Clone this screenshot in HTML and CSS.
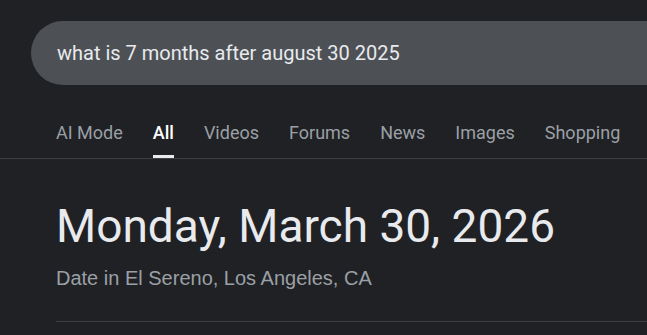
FILE: index.html
```html
<!DOCTYPE html>
<html lang="en">
<head>
    <meta charset="UTF-8">
    <meta name="viewport" content="width=device-width, initial-scale=1.0">
    <title>what is 7 months after august 30 2025</title>
    <link rel="stylesheet" href="styles.css">
</head>
<body>
    <div class="search-bar">
        <span class="query">what is 7 months after august 30 2025</span>
    </div>

    <nav class="tabs">
        <a class="tab">AI Mode</a>
        <a class="tab active">All</a>
        <a class="tab">Videos</a>
        <a class="tab">Forums</a>
        <a class="tab">News</a>
        <a class="tab">Images</a>
        <a class="tab">Shopping</a>
    </nav>

    <div class="answer">
        <h1 class="answer-date">Monday, March 30, 2026</h1>
        <p class="answer-place">Date in El Sereno, Los Angeles, CA</p>
        <div class="answer-rule"></div>
    </div>
</body>
</html>
```

FILE: styles.css
```css
body {
    margin: 0;
    background: #202124;
    font-family: Roboto, Arial, sans-serif;
    color: #e8eaed;
    overflow: hidden;
    height: 335px;
}
/* the box runs off the right side of the window, so only the left end is rounded */
.search-bar {
    margin: 21px 0 0 31px;
    height: 64px;
    border-radius: 32px 0 0 32px;
    background: #4d5156;
    display: flex;
    align-items: center;
    padding-left: 26px;
}
.query {
    font-size: 20px;
    color: #e8eaed;
}
.tabs {
    display: flex;
    gap: 30px;
    padding: 0 0 0 56px;
    margin-top: 37px;
    border-bottom: 1px solid #3c4043;
    white-space: nowrap;
    overflow: hidden;
}
.tab {
    font-size: 18px;
    line-height: 22px;
    color: #9aa0a6;
    padding-bottom: 11px;
    border-bottom: 3px solid transparent;
}
.tab.active {
    color: #fff;
    font-weight: 500;
    border-bottom-color: #e8eaed;
}
.answer {
    padding-left: 56px;
}
.answer-date {
    margin: 39px 0 0;
    font-size: 46px;
    font-weight: 400;
    line-height: 56px;
    color: #e8eaed;
}
.answer-place {
    margin: 12px 0 0;
    font-family: "Liberation Sans", Arial, sans-serif;
    font-size: 20px;
    line-height: 24px;
    color: #9aa0a6;
}
.answer-rule {
    margin-top: 31px;
    border-top: 1px solid #3c4043;
}
```
